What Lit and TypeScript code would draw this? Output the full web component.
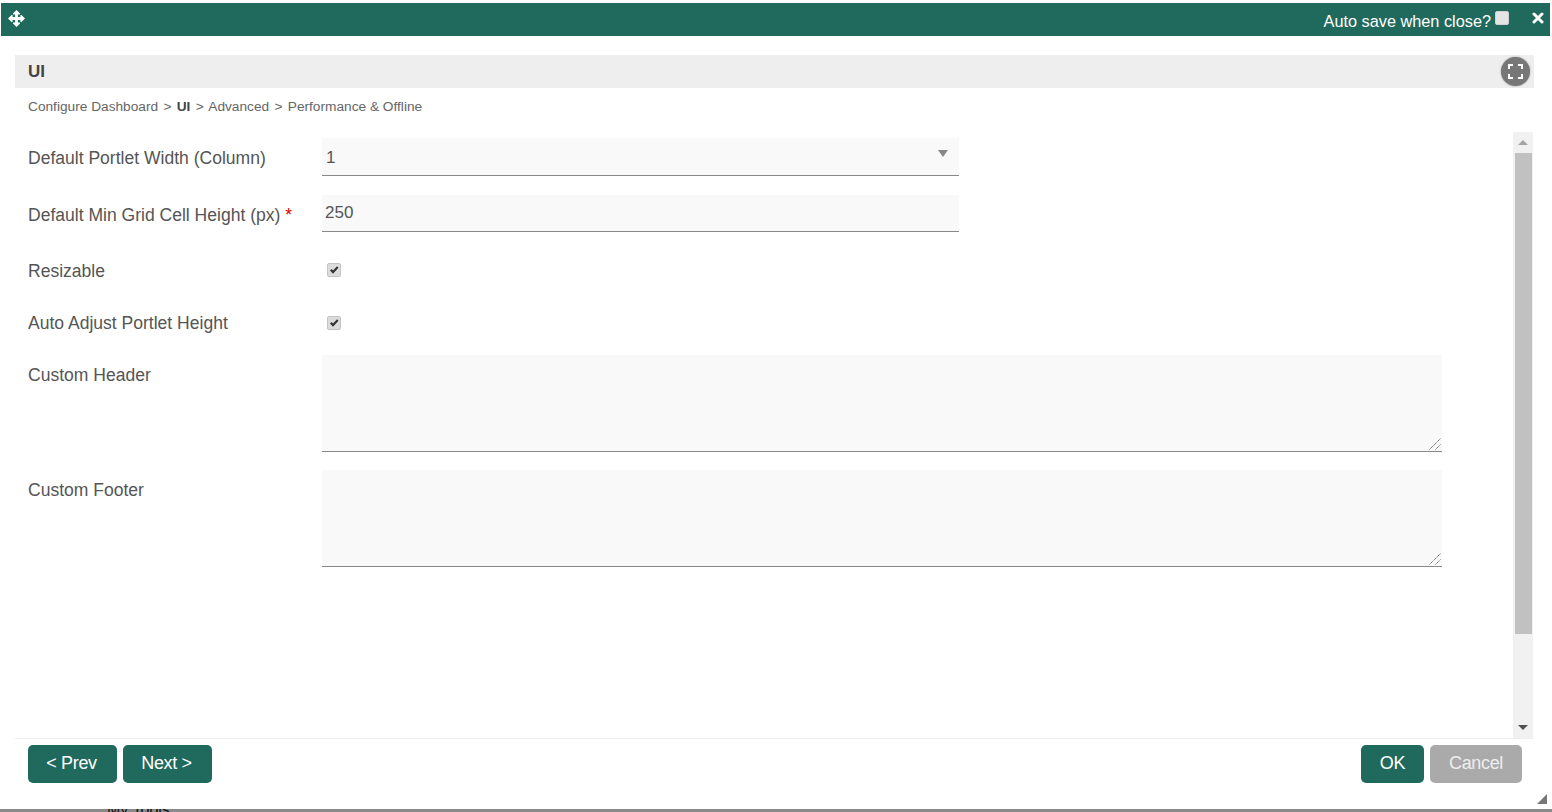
import { LitElement, html, css } from "lit";
import { customElement } from "lit/decorators.js";

const check = html`<svg viewBox="0 0 14 14" width="14" height="14"><path d="M3 7.4 L4.6 5.9 L6 7.4 L10 3.2 L11.5 4.7 L6 10.8 Z" fill="#333"/></svg>`;
const grip = html`<svg class="tgrip" width="12" height="12" viewBox="0 0 12 12" fill="none" stroke="#666" stroke-width="1" stroke-dasharray="1.4 0.6"><path d="M0.5 11.5 L11.5 0.5 M6.5 11.5 L11.5 6.5"/></svg>`;

@customElement("app-root")
export class AppRoot extends LitElement {
  static styles = css`
    :host { display: flex; flex-direction: column; width: 1552px; height: 812px; overflow: hidden; background: #fff; font-family: "Liberation Sans", Arial, sans-serif; color: #555; position: relative; }
    * { box-sizing: border-box; }
    .titlebar { flex: none; height: 33px; margin: 3px 2px 0 1px; background: #206a5d; color: #fff; display: flex; align-items: flex-start; }
    .move { margin: 7px 0 0 7px; display: block; }
    .autosave { margin-left: auto; margin-top: 8px; font-size: 16.3px; line-height: 20px; }
    .cb { display: block; width: 14px; height: 14px; border-radius: 2px; background: #dcdcdc; border: 1px solid #c4c4c4; position: relative; flex: none; }
    .cb svg { position: absolute; left: -1px; top: -1px; }
    .cb.top { margin: 8px 0 0 4px; background: #e4e4e4; border-color: #d0d0d0; }
    .close { margin: 9px 6px 0 23px; display: block; }
    .section { flex: none; margin: 19px 18px 0 15px; height: 728px; display: flex; flex-direction: column; }
    .head { flex: none; height: 33px; background: #eee; display: flex; align-items: center; justify-content: space-between; padding: 0 5px 0 13px; font-size: 17px; font-weight: 700; color: #444; }
    .fs { width: 29px; height: 29px; border-radius: 50%; background: #777; box-shadow: 0 0 2px #999; display: flex; align-items: center; justify-content: center; margin-top: -1px; margin-right: -1px; }
    .crumbs { flex: none; height: 36px; padding: 10px 0 0 13px; font-size: 13.7px; line-height: 18px; color: #666; }
    .crumbs b { color: #444; }
    .crumbs i { font-style: normal; margin: 0 1.5px; }
    .body { flex: 1; min-height: 0; margin-top: 8px; display: flex; }
    .form { flex: 1; padding: 6px 0 0 13px; font-size: 17.55px; }
    .row { display: flex; margin-bottom: 19px; }
    .row label { flex: none; width: 294px; line-height: 20px; color: #555; padding-top: 10px; }
    .req { color: #d00; }
    .row.chk { height: 38px; margin-bottom: 15px; align-items: center; }
    .row.chk.last { margin-bottom: 13px; }
    .row.chk label { padding-top: 1px; }
    .row.chk.last label { padding-top: 0; }
    .row.chk .cb { margin-left: 5px; }
    .row.ta { margin-bottom: 18px; }
    .field { position: relative; width: 637px; height: 38px; }
    .field.i { height: 37px; }
    .field.t { width: 1120px; height: 97px; }
    select, input, textarea { display: block; width: 100%; height: 100%; border: none; border-bottom: 1px solid #888; background: #f9f9f9; font-family: inherit; font-size: 17px; color: #555; outline: none; border-radius: 0; margin: 0; }
    select { appearance: none; padding: 2px 4px 0; }
    input { padding: 0 3px; }
    .arrow { position: absolute; right: 11px; top: 12px; width: 0; height: 0; border-left: 5px solid transparent; border-right: 5px solid transparent; border-top: 7px solid #888; }
    textarea { resize: none; padding: 4px; }
    .tgrip { position: absolute; right: 1px; bottom: 2px; display: block; }
    .sb { flex: none; width: 20px; margin-right: 1px; background: #f1f1f1; display: flex; flex-direction: column; align-items: center; }
    .sb .up, .sb .down { flex: none; height: 21px; width: 100%; display: flex; align-items: center; justify-content: center; }
    .tri-up { width: 0; height: 0; border-left: 5px solid transparent; border-right: 5px solid transparent; border-bottom: 5px solid #a3a3a3; }
    .tri-down { width: 0; height: 0; border-left: 5px solid transparent; border-right: 5px solid transparent; border-top: 5px solid #505050; }
    .thumb { flex: none; width: 17px; height: 481px; background: #c1c1c1; }
    .grow { flex: 1; }
    .footer { flex: none; height: 45px; border-top: 1px solid #eee; display: flex; align-items: flex-start; padding: 6px 12px 0 13px; gap: 6px; }
    .btn { height: 38px; border-radius: 5px; background: #206a5d; color: #fff; font-size: 18px; letter-spacing: -0.35px; display: flex; align-items: center; justify-content: center; padding: 0 2px 2px 0; width: 89px; }
    .btn.ok { width: 63px; margin-left: auto; padding-right: 0; }
    .btn.cancel { width: 92px; background: #aaa; color: #eee; padding-right: 0; }
    .grip { position: absolute; right: 5px; bottom: 8px; display: block; }
    .strip { position: absolute; left: 0; right: 0; bottom: 0; height: 3px; background: #8a8a8a; overflow: hidden; }
    .strip span { position: absolute; left: 107px; top: -6px; font-size: 16px; line-height: 14px; color: #111; }
  `;

  render() {
    return html`
      <div class="titlebar">
        <svg class="move" width="17" height="17" viewBox="0 0 17 17" fill="#fff"><path d="M8.5 0 L12 3.6 L12 4.6 L9.9 4.6 L9.9 7.1 L12.4 7.1 L12.4 5 L13.4 5 L17 8.5 L13.4 12 L12.4 12 L12.4 9.9 L9.9 9.9 L9.9 12.4 L12 12.4 L12 13.4 L8.5 17 L5 13.4 L5 12.4 L7.1 12.4 L7.1 9.9 L4.6 9.9 L4.6 12 L3.6 12 L0 8.5 L3.6 5 L4.6 5 L4.6 7.1 L7.1 7.1 L7.1 4.6 L5 4.6 L5 3.6 Z"/></svg>
        <span class="autosave">Auto save when close?</span>
        <span class="cb top"></span>
        <svg class="close" width="12" height="12" viewBox="0 0 12 12"><path d="M2 2 L10 10 M10 2 L2 10" stroke="#fff" stroke-width="3" stroke-linecap="round"/></svg>
      </div>
      <div class="section">
        <div class="head"><span>UI</span>
          <span class="fs"><svg width="15" height="15" viewBox="0 0 15 15" fill="none" stroke="#fff" stroke-width="2"><path d="M1 5 V1 H5 M10 1 H14 V5 M14 10 V14 H10 M5 14 H1 V10"/></svg></span>
        </div>
        <div class="crumbs">Configure Dashboard <i>&gt;</i> <b>UI</b> <i>&gt;</i> Advanced <i>&gt;</i> Performance &amp; Offline</div>
        <div class="body">
          <div class="form">
            <div class="row"><label>Default Portlet Width (Column)</label>
              <div class="field"><select><option>1</option></select><span class="arrow"></span></div></div>
            <div class="row"><label>Default Min Grid Cell Height (px) <span class="req">*</span></label>
              <div class="field i"><input value="250" /></div></div>
            <div class="row chk"><label>Resizable</label><span class="cb">${check}</span></div>
            <div class="row chk last"><label>Auto Adjust Portlet Height</label><span class="cb">${check}</span></div>
            <div class="row ta"><label>Custom Header</label><div class="field t"><textarea></textarea>${grip}</div></div>
            <div class="row ta"><label>Custom Footer</label><div class="field t"><textarea></textarea>${grip}</div></div>
          </div>
          <div class="sb">
            <div class="up"><span class="tri-up"></span></div>
            <div class="thumb"></div>
            <div class="grow"></div>
            <div class="down"><span class="tri-down"></span></div>
          </div>
        </div>
        <div class="footer">
          <div class="btn">&lt; Prev</div>
          <div class="btn">Next &gt;</div>
          <div class="btn ok">OK</div>
          <div class="btn cancel">Cancel</div>
        </div>
      </div>
      <svg class="grip" width="10" height="10" viewBox="0 0 10 10"><path d="M10 0 V10 H0 Z" fill="#777"/></svg>
      <div class="strip"><span>My Tools</span></div>
    `;
  }
}
